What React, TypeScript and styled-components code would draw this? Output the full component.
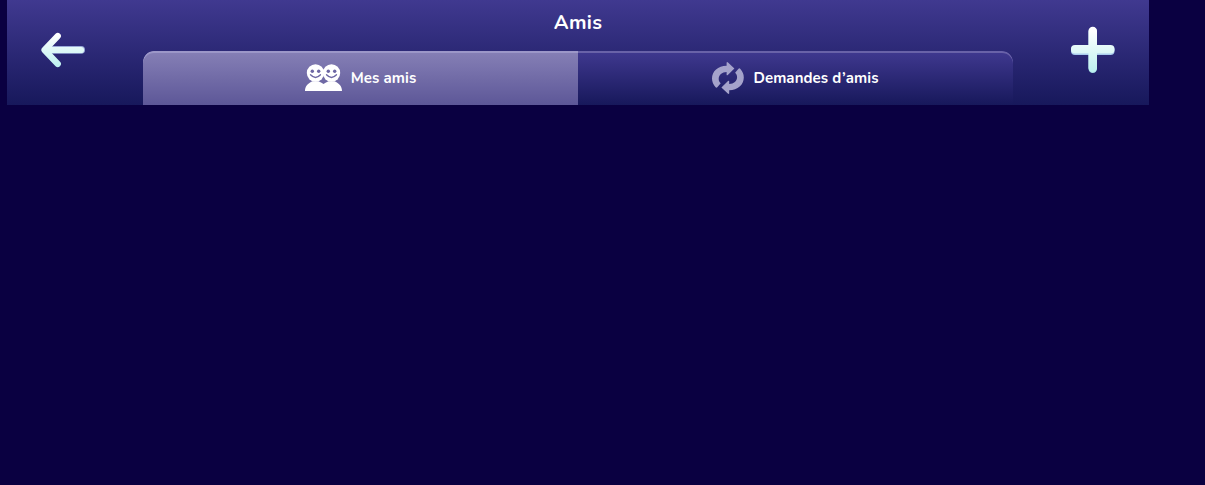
import { FC, ReactNode, useState } from 'react';
import styled, { createGlobalStyle } from 'styled-components';

const GlobalStyle = createGlobalStyle`
  * {
    box-sizing: border-box;
  }

  body {
    margin: 0;
    background: #0a0041;
    font-family: Nunito, Lato, sans-serif;
    color: #fff;
  }
`;

const Page = styled.div`
  min-height: 485px;
  padding: 0 56px 0 7px;
`;

const Header = styled.header`
  display: flex;
  justify-content: space-between;
  height: 105px;
  background: linear-gradient(#403990, #17185b);
`;

const IconButton = styled.button`
  flex: 0 0 112px;
  height: 100px;
  padding: 0;
  border: 0;
  background: none;
  cursor: pointer;

  svg {
    display: block;
    margin: 0 auto;
  }
`;

const Center = styled.div`
  flex: 0 0 870px;
  display: flex;
  flex-direction: column;
`;

const Title = styled.h1`
  height: 51px;
  margin: 0;
  padding-top: 9px;
  font-size: 20px;
  line-height: 28px;
  font-weight: 700;
  letter-spacing: 0.25px;
  text-align: center;
`;

const Tabs = styled.nav`
  display: flex;
  height: 54px;
  border-radius: 11px 11px 0 0;
  overflow: hidden;
`;

const Tab = styled.button<{ $active: boolean; $side: 'left' | 'right' }>`
  flex: 1;
  display: flex;
  align-items: center;
  justify-content: center;
  gap: 9px;
  padding: 0;
  border: 0;
  border-radius: ${(p) => (p.$side === 'left' ? '11px 0 0 0' : '0 11px 0 0')};
  background: ${(p) =>
    p.$active ? 'linear-gradient(#8680b6, #5d5798)' : 'linear-gradient(#403990, #17185b)'};
  box-shadow: inset 0 2px 0 ${(p) => (p.$active ? '#9c97c8' : '#6962a8')};
  color: #fff;
  font: inherit;
  font-size: 15px;
  font-weight: 700;
  line-height: 20px;
  cursor: pointer;
`;

const Label = styled.span`
  letter-spacing: 0.08px;
  white-space: nowrap;
`;

const BackIcon = () => (
  <svg width="46" height="38" viewBox="0 0 46 38">
    <defs>
      <linearGradient id="back" x1="0" y1="0" x2="0" y2="38" gradientUnits="userSpaceOnUse">
        <stop offset="0.1" stopColor="#fff" />
        <stop offset="1" stopColor="#b8f0ee" />
      </linearGradient>
    </defs>
    <path d="M8 18.9H41.2" stroke="#9aaad8" strokeWidth="7.6" strokeLinecap="round" />
    <path
      d="M5 19H41M17.8 5L4.5 19L17.8 33"
      fill="none"
      stroke="url(#back)"
      strokeWidth="6.2"
      strokeLinecap="round"
      strokeLinejoin="round"
    />
  </svg>
);

const PlusIcon = () => (
  <svg width="46" height="48" viewBox="0 0 46 48">
    <defs>
      <linearGradient id="plus" x1="0" y1="0" x2="0" y2="48" gradientUnits="userSpaceOnUse">
        <stop offset="0.1" stopColor="#fff" />
        <stop offset="1" stopColor="#b9f0ee" />
      </linearGradient>
    </defs>
    <rect x="1" y="20" width="43.5" height="9" rx="4" fill="#a9cbed" />
    <rect x="18.5" y="1.5" width="8.5" height="45.5" rx="4.2" fill="#a9e0e8" />
    <rect x="18.5" y="0.7" width="8.5" height="45.3" rx="4.2" fill="url(#plus)" />
    <rect x="1" y="19" width="43.5" height="8.5" rx="4" fill="url(#plus)" />
  </svg>
);

const FriendsIcon = () => (
  <svg width="37" height="28" viewBox="0 0 37 28">
    <g fill="#fff">
      <circle cx="10.5" cy="9" r="8.7" />
      <circle cx="26.5" cy="9" r="8.7" />
      <path d="M0 27C0 22 3 19.2 7.5 17.2H13.5Q17 18.6 18.5 20Q20 18.6 23.5 17.2H29.5C34 19.2 37 22 37 27Z" />
    </g>
    <g fill="#6d67a4">
      <circle cx="7.3" cy="7.2" r="1.7" />
      <circle cx="13.7" cy="7.2" r="1.7" />
      <circle cx="23.3" cy="7.2" r="1.7" />
      <circle cx="29.7" cy="7.2" r="1.7" />
    </g>
    <path
      d="M5.5 10.8Q10.5 16.2 15.5 10.8M21.5 10.8Q26.5 16.2 31.5 10.8"
      fill="none"
      stroke="#6d67a4"
      strokeWidth="1.3"
      strokeLinecap="round"
    />
  </svg>
);

const RequestsIcon = () => (
  <svg width="32" height="32" viewBox="0 0 32 32">
    <g fill="#a5a3cb">
      <path
        id="half"
        d="M14.6 0.4Q15.2 -0.2 16 0.5L22.4 6.6L15.8 13Q14.6 13.8 14.6 12.4V10C10 10.2 6.7 13 6.7 17C6.7 18.6 7.3 20 8.7 21.3L5.3 25.3Q4.3 26.1 3.4 25C1.2 22.6 0 19.7 0 16.6C0 9.4 6 3.9 14.6 3.8Z"
      />
      <use href="#half" transform="rotate(180 15.9 16)" />
    </g>
  </svg>
);

interface ITab {
  id: string;
  label: string;
  icon: ReactNode;
  side: 'left' | 'right';
}

const tabs: ITab[] = [
  { id: 'friends', label: 'Mes amis', icon: <FriendsIcon />, side: 'left' },
  { id: 'requests', label: 'Demandes d’amis', icon: <RequestsIcon />, side: 'right' },
];

const App: FC = () => {
  const [current, setCurrent] = useState('friends');

  return (
    <>
      <GlobalStyle />
      <Page>
        <Header>
          <IconButton aria-label="Retour">
            <BackIcon />
          </IconButton>
          <Center>
            <Title>Amis</Title>
            <Tabs>
              {tabs.map((tab) => (
                <Tab
                  key={tab.id}
                  $active={tab.id === current}
                  $side={tab.side}
                  onClick={() => setCurrent(tab.id)}
                >
                  {tab.icon}
                  <Label>{tab.label}</Label>
                </Tab>
              ))}
            </Tabs>
          </Center>
          <IconButton aria-label="Ajouter un ami">
            <PlusIcon />
          </IconButton>
        </Header>
      </Page>
    </>
  );
};

export default App;
